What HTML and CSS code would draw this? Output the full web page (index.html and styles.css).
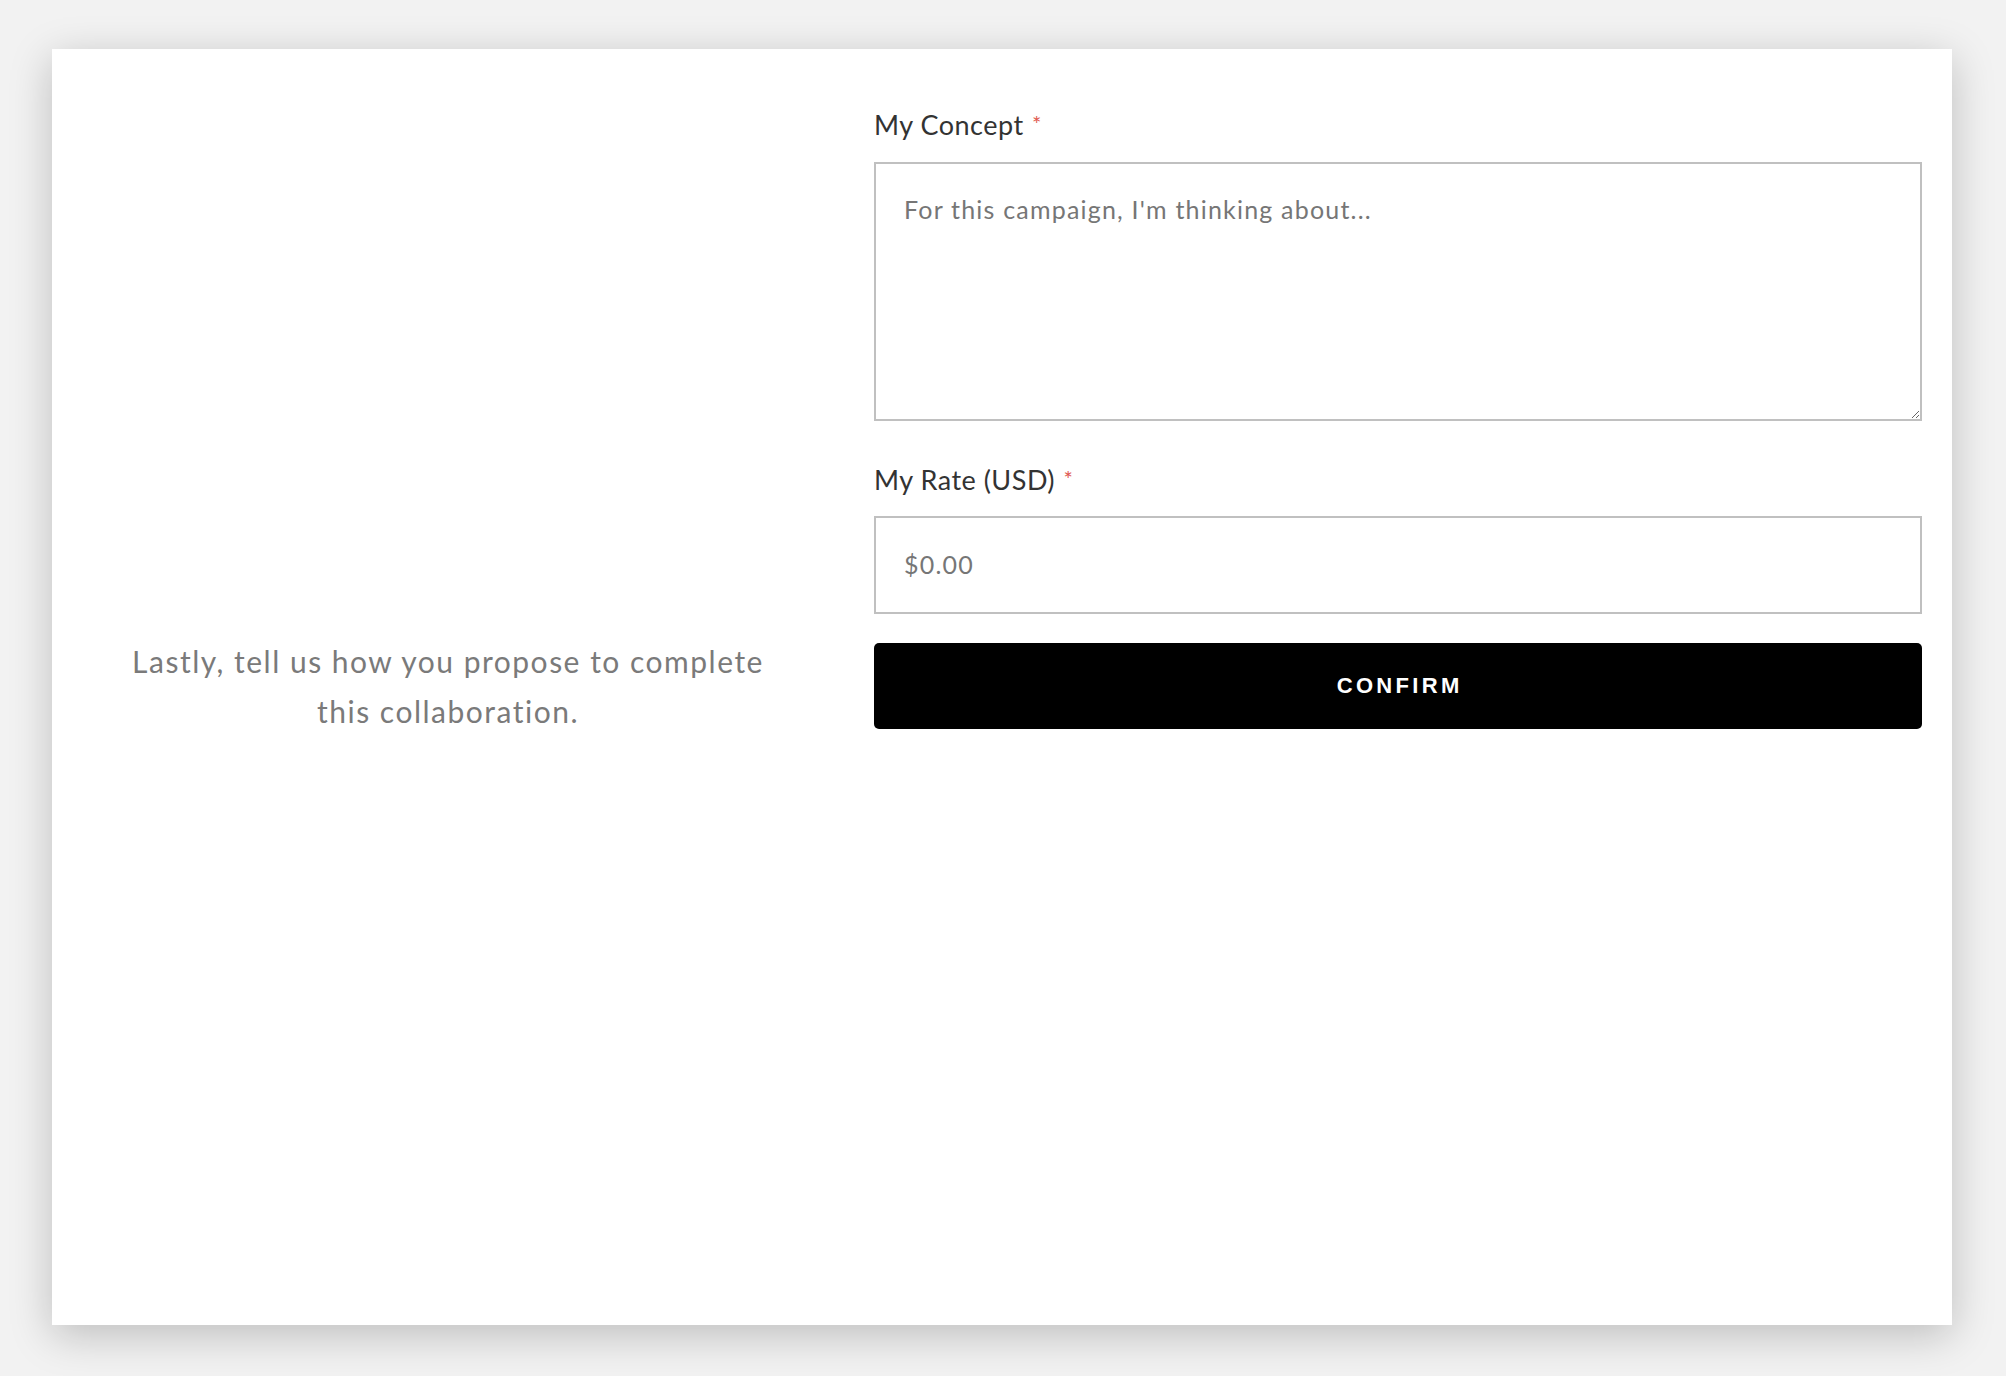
FILE: index.html
```html
<!DOCTYPE html>
<html lang="en">
<head>
<meta charset="utf-8">
<title>Proposal</title>
<link rel="stylesheet" href="styles.css">
</head>
<body>
<main class="card">
  <section class="intro">
    <p class="intro-text">Lastly, tell us how you propose to complete<br>this collaboration.</p>
  </section>
  <form class="form">
    <label class="field-label" for="concept">My Concept <span class="req">*</span></label>
    <textarea id="concept" class="textarea" placeholder="For this campaign, I'm thinking about..."></textarea>
    <label class="field-label field-label-rate" for="rate">My Rate (USD) <span class="req">*</span></label>
    <input id="rate" class="input" type="text" placeholder="$0.00">
    <button type="button" class="confirm">CONFIRM</button>
  </form>
</main>
</body>
</html>
```
FILE: styles.css
```css
html, body {
  margin: 0;
  padding: 0;
}
body {
  background: #f2f2f2;
  width: 2006px;
  height: 1376px;
  overflow: hidden;
  font-family: "Lato", "Open Sans", sans-serif;
}
.card {
  box-sizing: border-box;
  margin: 49px 0 0 52px;
  width: 1900px;
  height: 1276px;
  background: #fff;
  box-shadow: 0 10px 40px rgba(0, 0, 0, 0.22);
  display: grid;
  grid-template-columns: 792px 1048px;
  column-gap: 30px;
  padding-right: 30px;
}
.intro {
  display: flex;
  align-items: center;
  justify-content: center;
}
.intro-text {
  margin: 0 0 2px;
  text-align: center;
  color: #7a7a7a;
  font-size: 30px;
  letter-spacing: 1.5px;
  line-height: 50px;
}
.form {
  display: flex;
  flex-direction: column;
  padding-top: 60px;
}
.field-label {
  color: #333;
  font-size: 27px;
  letter-spacing: 0.5px;
  line-height: 32px;
  margin-bottom: 21px;
}
.field-label-rate {
  margin-top: 43px;
  margin-bottom: 20px;
}
.req {
  color: #e0574f;
  font-size: 22px;
  letter-spacing: 0;
  margin-left: 1px;
  vertical-align: top;
  position: relative;
  top: -1px;
}
.textarea, .input {
  box-sizing: border-box;
  width: 100%;
  border: 2px solid #c0c0c0;
  border-radius: 0;
  font-family: inherit;
  font-size: 25px;
  letter-spacing: 1.2px;
  color: #333;
  outline: none;
  background: #fff;
  margin: 0;
}
.textarea {
  height: 259px;
  padding: 27px 28px 25px;
  line-height: 36px;
  resize: vertical;
}
.input {
  height: 98px;
  padding: 0 28px 2px;
}
.textarea::placeholder, .input::placeholder {
  color: #767676;
  opacity: 1;
}
.confirm {
  margin-top: 29px;
  height: 86px;
  background: #000;
  color: #fff;
  border: 0;
  border-radius: 5px;
  font-family: "Liberation Sans", Arial, sans-serif;
  font-weight: 700;
  font-size: 22px;
  letter-spacing: 3.3px;
  padding: 0 0 0 3.3px;
  cursor: pointer;
}
```
